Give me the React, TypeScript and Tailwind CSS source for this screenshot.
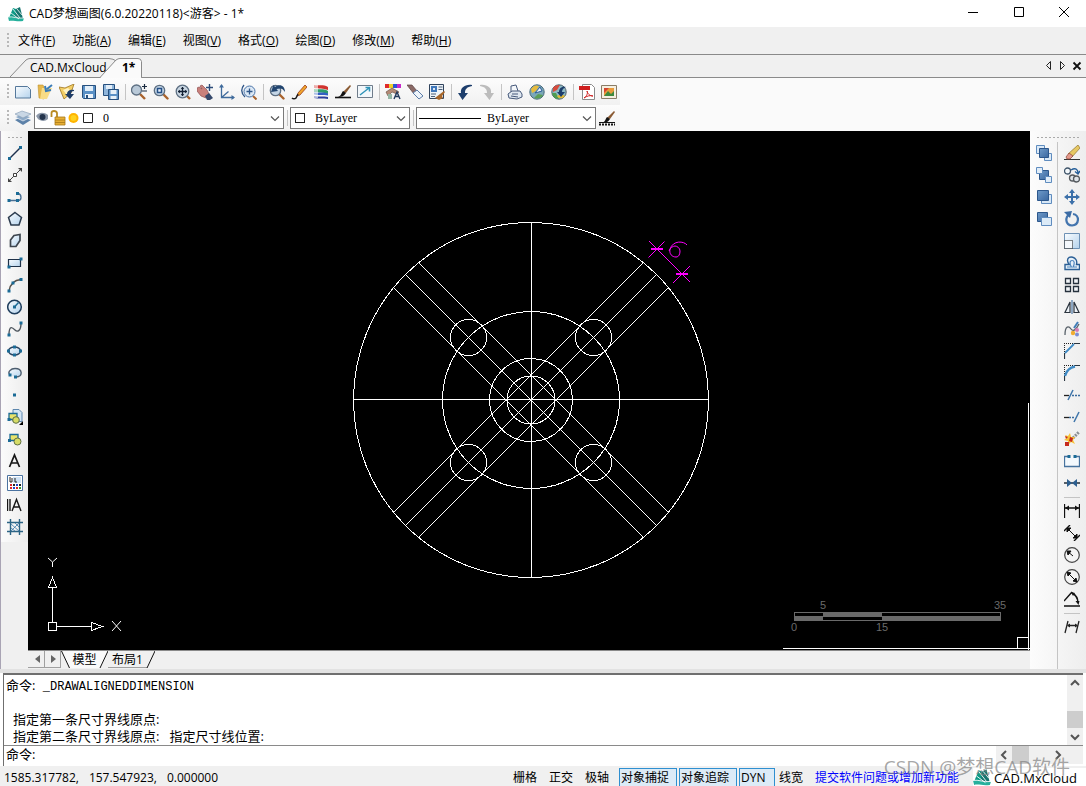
import type { ReactNode } from "react";

type Tool = { name: string; icon: ReactNode } | null;

const gradients = (
  <svg width="0" height="0" className="absolute" aria-hidden="true">
    <defs>
      <linearGradient id="sheet" x1="0" y1="0" x2="1" y2="1">
        <stop offset="0" stopColor="#fafdff" />
        <stop offset="1" stopColor="#b4d2ec" />
      </linearGradient>
      <linearGradient id="steel" x1="0" y1="0" x2="1" y2="1">
        <stop offset="0" stopColor="#6f9bca" />
        <stop offset="1" stopColor="#3a679f" />
      </linearGradient>
    </defs>
  </svg>
);

const lens = (
  <>
    <path d="M10.5 10.5l4 4" stroke="#a8622c" strokeWidth="2.4" strokeLinecap="round" />
    <circle cx="6.5" cy="6.5" r="5.2" fill="#c3d5e6" stroke="#5d6f82" strokeWidth="1.3" />
  </>
);

const node = (x: number, y: number) => (
  <rect key={`${x}-${y}`} x={x - 1.5} y={y - 1.5} width="3" height="3" fill="#1b6b96" />
);

const fileTools: Tool[] = [
  { name: "新建", icon: <path d="M.5 2.5h12l3 3v8.500h-15z" fill="url(#sheet)" stroke="#55789b" /> },
  {
    name: "打开",
    icon: (
      <>
        <path d="M1 1h5l1 2v12l-5-1z" fill="#e5b84c" stroke="#c0922f" strokeWidth=".6" />
        <path d="M5 4h10l-5 11H3z" fill="#f8dc86" />
        <path d="M15 1l-5 4M8 2l1 5 5-1" stroke="#3b7cb8" strokeWidth="2" fill="none" />
      </>
    ),
  },
  {
    name: "打开云图",
    icon: (
      <>
        <path d="M0 3l6 1 9-4-3 9-7 6z" fill="#f3cf66" stroke="#9d7420" strokeWidth=".8" />
        <path d="M4 6l5-2 3 3-4 4z" fill="#fff3c4" />
        <path d="M15 6c-4-1-7 1-7 4H6l5 5 4-5h-3c0-2 1-3 3-3z" fill="#1f3c66" />
      </>
    ),
  },
  {
    name: "保存",
    icon: (
      <>
        <path d="M1.5 1.5h13v13h-12l-1-1z" fill="#5b91c6" stroke="#27507e" />
        <path d="M4 2h8v5H4z" fill="#e3eff9" />
        <path d="M4 10h8v4H4z" fill="#eef4fa" />
        <path d="M5 11h2v3H5z" fill="#27507e" />
      </>
    ),
  },
  {
    name: "全部保存",
    icon: (
      <>
        <path d="M.5 .5h11v11H.5z" fill="#8fb5da" stroke="#27507e" />
        <path d="M3 1h6v4H3z" fill="#e3eef8" />
        <path d="M5.500 5.500h10v10h-10z" fill="#5b91c6" stroke="#27507e" />
        <path d="M7.500 6h6v4h-6zM7.500 12h6v3h-6z" fill="#e6f0f8" />
      </>
    ),
  },
  null,
  {
    name: "实时缩放",
    icon: (
      <>
        <path d="M9 10l5 5" stroke="#a8622c" strokeWidth="2.4" />
        <circle cx="5.500" cy="6" r="5" fill="#b9c9d8" stroke="#5d6f82" strokeWidth="1.300" />
        <path d="M13.500 0v5M11 2.500h5M11 7h5" stroke="#1b2b40" strokeWidth="1.200" />
      </>
    ),
  },
  { name: "窗口缩放", icon: <>{lens}<path d="M4.500 4.500h4v4h-4z" fill="#e8f1fa" stroke="#244f86" strokeWidth="1.500" /></> },
  {
    name: "范围缩放",
    icon: (
      <>
        <path d="M11 11l4 4" stroke="#a8622c" strokeWidth="2.400" />
        <circle cx="7.500" cy="7.500" r="6.300" fill="#c9d6e2" stroke="#5d6f82" strokeWidth="1.300" />
        <path d="M7.500 3v9M3 7.500h9" stroke="#111f33" strokeWidth="1.300" />
        <path d="M5.800 5l1.700-2 1.700 2zM5.800 10l1.700 2 1.700-2zM5 5.800l-2 1.700 2 1.700zM10 5.800l2 1.700-2 1.700z" fill="#111f33" />
      </>
    ),
  },
  {
    name: "平移",
    icon: (
      <>
        <path d="M0 4l2-1 3 2-2-3 2-1 5 5 2 4-3 4-5-2-4-5z" fill="#c9817c" stroke="#8d4f50" strokeWidth=".7" />
        <path d="M8 12l4-3 4 5-3 2h-3z" fill="#35486b" />
        <path d="M12.500 0v7M9 3.500h7" stroke="#2c4c79" strokeWidth="1.400" />
      </>
    ),
  },
  {
    name: "坐标系",
    icon: (
      <>
        <path d="M2.500 1v12.500H15M2.500 13.500l7-6" fill="none" stroke="#3f6b9c" strokeWidth="1.300" />
        <path d="M0 3.500L2.500 0 5 3.500zM12.500 11l3.500 2.500-3.500 2.500z" fill="#3f6b9c" />
      </>
    ),
  },
  {
    name: "缩放比例",
    icon: (
      <>
        <path d="M12 12l3.500 3.500" stroke="#a8622c" strokeWidth="2" />
        <circle cx="8.500" cy="7.500" r="5.500" fill="#dbe8f5" stroke="#4b74a8" />
        <path d="M3 1q-5 6 1 12M8.500 4.500v6M5.500 7.500h6" fill="none" stroke="#2f5688" strokeWidth="1.300" />
      </>
    ),
  },
  null,
  {
    name: "上一视图",
    icon: (
      <>
        {lens}
        <path d="M16 8c0-6-5-9-10-5L4.500 1 2 8l7-1-1.500-2c4-1 6-1 8.500 3z" fill="#22456f" />
      </>
    ),
  },
  {
    name: "画笔",
    icon: (
      <>
        <path d="M14 1l2 2-7 8-3 1 1-3z" fill="#f0a52c" stroke="#9c3b1b" strokeWidth=".8" />
        <path d="M7 10l-1 2-1 2c-1 1-3 1-4 0" fill="none" stroke="#1a1a1a" strokeWidth="1.500" />
      </>
    ),
  },
  {
    name: "图层颜色",
    icon: (
      <>
        <path d="M1 1c5 1 9-1 14 2v3C10 4 6 5 1 4z" fill="#d0342f" />
        <path d="M1 5c5 1 9-1 14 2v3c-5-2-9-1-14-2z" fill="#2e9c6c" />
        <path d="M1 8.500c5 1 9-1 14 1v2c-5-1-9 0-14-1z" fill="#3260c4" />
        <path d="M1 12c5 1 9 0 14 1v2c-5-1-9 0-14-1z" fill="#2a3e9c" />
        <path d="M1 1v13h4V1z" fill="#fff" fillOpacity=".6" />
      </>
    ),
  },
  {
    name: "线型",
    icon: (
      <>
        <path d="M15 1l1 1-5 7-3-1z" fill="#8a5a33" />
        <path d="M8 7l3 2c-2 3-4 4-8 4 3-1 3-3 5-6z" fill="#111" />
        <path d="M0 13.500h16" stroke="#111" strokeWidth="1.600" />
      </>
    ),
  },
  {
    name: "全屏",
    icon: (
      <>
        <path d="M.5 1.500h15v12H.5z" fill="#f2f7fb" stroke="#6f7c8a" />
        <path d="M3 11l9-7M8.500 3.500h4v4" fill="none" stroke="#2f94b8" strokeWidth="1.500" />
      </>
    ),
  },
  null,
  {
    name: "颜色替换",
    icon: (
      <>
        <path d="M0 0h4v4H0z" fill="#e02b2b" />
        <path d="M4 0h4v4H4z" fill="#f0d02a" />
        <path d="M8 0h4v4H8z" fill="#2856d6" />
        <path d="M12 0h4v4h-4z" fill="#c72ac9" />
        <path d="M1 8l6-4 7 4-2 2-5-2-4 4z" fill="#b38a76" stroke="#604437" strokeWidth=".6" />
        <path d="M3 10h4v5H3z" fill="#95b6a5" />
        <path d="M9 15l3-7 3 7M10 12.500h4" fill="none" stroke="#233a5c" strokeWidth="1.400" />
      </>
    ),
  },
  {
    name: "格式刷",
    icon: (
      <>
        <path d="M0 1l5 0 5 6-3 3z" fill="#8b6a66" stroke="#5a4040" strokeWidth=".7" />
        <path d="M6 9l4-3 6 6-4 3z" fill="#eef4fa" stroke="#5b7ba6" />
      </>
    ),
  },
  {
    name: "属性",
    icon: (
      <>
        <path d="M.5 .5h14v14H.5z" fill="#eef3f8" stroke="#30435c" />
        <path d="M2 2h6v6H2z" fill="#3f77bb" />
        <path d="M4 4h2v2H4z" fill="#dbe8f5" />
        <path d="M9.500 3h4M9.500 5.500h4M2 10h5M2 12.500h4" stroke="#4c6078" />
        <path d="M15 7l1 1-3 4 1 2-4 2-4-2 5-4z" fill="#a8672a" />
      </>
    ),
  },
  null,
  { name: "撤销", icon: <path d="M15 1C8 0 3 4 4 9H1l4.500 7L11 9H8c0-4 2-6 7-7z" fill="#1d3e6c" /> },
  { name: "重做", icon: <path d="M1 1c7-1 12 3 11 8h3l-4.500 7L5 9h3c0-4-2-6-7-7z" fill="#bcbcbc" /> },
  null,
  {
    name: "打印",
    icon: (
      <>
        <path d="M4 8V2l5-1 2 6" fill="#f4f7fa" stroke="#46597a" />
        <path d="M1 10l4-3 8 0 2 3v3l-5 2-8-1z" fill="#dfe7f0" stroke="#46597a" />
        <path d="M5 10h6M4 12l7 1" stroke="#46597a" />
      </>
    ),
  },
  {
    name: "发布到网页",
    icon: (
      <>
        <circle cx="8" cy="8" r="7.200" fill="#7aa7b8" stroke="#4a6a7c" />
        <path d="M2 5c3-4 5-4 8-3L7 7 3 9z" fill="#e6bb3e" />
        <path d="M5 14l4-4 5 1c-2 4-6 4-9 3z" fill="#5a9e56" />
        <path d="M6 9l5-6 2 4z" fill="#eaf3fb" stroke="#2f5f9a" />
      </>
    ),
  },
  {
    name: "网络图纸",
    icon: (
      <>
        <circle cx="8" cy="8" r="7.200" fill="#8db9c4" stroke="#4c5f6a" />
        <path d="M2 4c2-3 5-3 7-3L6 6 2 8z" fill="#d84b3d" />
        <path d="M1 9l4 0 3 6c-4 0-6-2-7-6z" fill="#4f9c51" />
        <path d="M6 12l4-2 4 2c-2 3-6 3-8 0z" fill="#e4bb35" />
        <path d="M15 3c-5-1-7 2-7 5H6l4 5 4-5h-3c0-2 1-4 4-5z" fill="#1d3e6c" />
      </>
    ),
  },
  null,
  {
    name: "导出PDF",
    icon: (
      <>
        <path d="M3.500 .5h9l3 3v12h-12z" fill="#fff" stroke="#8a8a8a" />
        <path d="M0 2h11v4H0z" fill="#cf1f1f" />
        <path d="M5 14c3-2 4-5 3-7 1 4 4 5 6 5-3-1-6 0-9 2z" fill="none" stroke="#cf1f1f" />
      </>
    ),
  },
  {
    name: "导出图片",
    icon: (
      <>
        <path d="M.5 1.500h15v13H.5z" fill="#f6efdf" stroke="#8a7d67" />
        <path d="M3 4h10v8H3z" fill="#e99a3a" />
        <path d="M3 12l4-5 3 3 3-3v5z" fill="#3f8a3d" />
        <path d="M3 4h5L3 9z" fill="#d4442f" />
      </>
    ),
  },
];

const layersIcon = (
  <>
    <path d="M0 10l7-3 9 3-8 5z" fill="#5c81a8" />
    <path d="M0 7l7-3 9 3-8 4z" fill="#8fabc8" stroke="#fff" strokeWidth=".6" />
    <path d="M0 4l7-3 9 3-8 4z" fill="#c9d7e5" stroke="#8198b0" strokeWidth=".6" />
  </>
);

const lineWeightIcon = (
  <>
    <path d="M15 1l1 1-5 7-3-1z" fill="#8a5a33" />
    <path d="M8 7l3 2c-2 3-4 4-8 4 3-1 3-3 5-6z" fill="#111" />
    <path d="M0 12.500h16" stroke="#111" />
    <path d="M0 14.500h16" stroke="#111" strokeWidth="2" strokeDasharray="2 1" />
  </>
);

const drawTools: Tool[] = [
  { name: "直线", icon: <><path d="M2.500 13.500l11-11" stroke="#1c2f4c" strokeWidth="1.500" />{node(2.5, 13.5)}{node(13.5, 2.500)}</> },
  {
    name: "构造线",
    icon: (
      <>
        <path d="M1 15L15 1" stroke="#444" />
        <path d="M11 1h4v4zM1 11v4h4z" fill="#444" />
        <path d="M6.500 6.500h3v3h-3z" fill="#fff" stroke="#444" />
      </>
    ),
  },
  { name: "多段线", icon: <><path d="M2 11.500h9c4 0 4-6 0-7" fill="none" stroke="#4a6f93" strokeWidth="1.300" />{node(2, 11.5)}{node(10.5, 11.500)}{node(10.5, 4.5)}</> },
  { name: "多边形", icon: <path d="M8 1.500l6.500 5-2.500 7.500H4L1.500 6.500z" fill="url(#sheet)" stroke="#2b3b4e" strokeWidth="1.500" /> },
  { name: "面域", icon: <path d="M7 2.500l6-1v6l-4 6H3.500V7z" fill="url(#sheet)" stroke="#3d454e" strokeWidth="1.700" /> },
  { name: "矩形", icon: <><path d="M1.500 4.500h12v7h-12z" fill="url(#sheet)" stroke="#1e3148" strokeWidth="1.200" />{node(2, 12)}{node(14, 4)}</> },
  { name: "圆弧", icon: <><path d="M2 14C3 8 7 3 14 2.500" fill="none" stroke="#5b534c" strokeWidth="1.500" />{node(2, 14)}{node(6, 6)}{node(14, 2.5)}</> },
  { name: "圆", icon: <><circle cx="7.500" cy="8" r="6.800" fill="url(#sheet)" stroke="#1e3d5c" strokeWidth="1.500" /><path d="M7.500 8l4-4.500" stroke="#1b6b96" strokeWidth="1.500" />{node(7.5, 8)}</> },
  { name: "样条曲线", icon: <><path d="M2 14C2 3 6 7 8 9s6 2 6-7" fill="none" stroke="#4e565e" strokeWidth="1.400" />{node(2, 14)}{node(14, 2)}</> },
  { name: "椭圆", icon: <><ellipse cx="7.500" cy="8" rx="6" ry="4" fill="url(#sheet)" stroke="#2b4460" strokeWidth="1.400" />{node(1.5, 8)}{node(7.5, 4)}{node(13.5, 8)}{node(7.5, 12)}</> },
  { name: "椭圆弧", icon: <><path d="M3 10C0 7 4 3.500 8 3.500c8 0 8 8 1 8.500" fill="url(#sheet)" stroke="#4d5d6e" strokeWidth="1.400" />{node(3, 10)}{node(8.5, 12)}</> },
  { name: "点", icon: node(7.500, 8) },
  {
    name: "插入块",
    icon: (
      <>
        <path d="M6 .5h6l3 3v9H6z" fill="#d4e6f5" stroke="#5c86ad" />
        <path d="M2 4.500h8v6H2z" fill="#e7e36b" stroke="#1b6b96" strokeWidth="1.300" />
        <circle cx="9" cy="11" r="3.300" fill="#d6dc67" stroke="#5f7045" />
        <path d="M12 16h4v-4z" fill="#000" />
        {node(2, 10.500)}
      </>
    ),
  },
  { name: "创建块", icon: <><path d="M3 3.500h8v6H3z" fill="#e7e36b" stroke="#1b6b96" strokeWidth="1.300" /><circle cx="10.500" cy="10.500" r="3.500" fill="#d6dc67" stroke="#5f7045" />{node(2.5, 9.5)}</> },
  { name: "文字", icon: <path d="M2.500 14L7.500 2 12.500 14M4.500 10h6.500" fill="none" stroke="#161616" strokeWidth="1.700" /> },
  {
    name: "填充",
    icon: (
      <>
        <path d="M.5 .5h15v15H.5z" fill="#fff" stroke="#4a72a0" />
        <path d="M6 2h8v6H6z" fill="#cfe2f4" />
        <path d="M3 2v5h2V3M7 4h2M7 6h2v2" fill="none" stroke="#222" />
        <path d="M3 9h2v2H3zM3 12h2v2H3z" fill="#d22" />
        <path d="M6 9h2v2H6zM12 9h2v2h-2z" fill="#222" />
        <path d="M6 12h2v2H6zM9 9h2v2H9z" fill="#24c" />
        <path d="M9 12h2v2H9z" fill="#d22" />
        <path d="M12 12h2v2h-2z" fill="#393" />
      </>
    ),
  },
  { name: "多行文字", icon: <path d="M.5 2v12M3 2v12M5 14l4.500-11.500L14 14M6.500 10h6" fill="none" stroke="#161616" strokeWidth="1.400" /> },
  {
    name: "图案",
    icon: (
      <>
        <path d="M3.500 0v16M12.500 0v16M0 3.500h16M0 12.500h16" stroke="#2c6485" strokeWidth="1.400" />
        <path d="M4 5l8 7M4 9l4 3M8 4l4 4M4 12l8-8" stroke="#3d78a8" strokeWidth=".8" />
      </>
    ),
  },
];

const orderTools: Tool[] = [
  { name: "前置", icon: <><path d="M.5 .5h8v8h-8zM8.500 8.500h7v7h-7z" fill="#dceaf7" stroke="#5f8cbf" /><path d="M3.500 3.500h9v9h-9z" fill="url(#steel)" stroke="#2c578c" /></> },
  { name: "后置", icon: <><path d="M3.500 3.500h9v9h-9z" fill="url(#steel)" stroke="#2c578c" /><path d="M.5 .5h6v6h-6zM9.500 9.500h6v6h-6z" fill="#e2eef9" stroke="#5f8cbf" /></> },
  { name: "置于对象之上", icon: <><path d="M5.500 5.500h10v9h-10z" fill="#d7e7f6" stroke="#5f8cbf" /><path d="M1.500 1.500h11v10h-11z" fill="url(#steel)" stroke="#2c578c" /></> },
  { name: "置于对象之下", icon: <><path d="M1.500 1.500h10v9h-10z" fill="url(#steel)" stroke="#2c578c" /><path d="M5.500 6.500h10v8h-10z" fill="#dbeaf7" stroke="#5f8cbf" /></> },
];

const arrowPair = "M3 3l10 10M3 3l4 1-3 3zM13 13l-4-1 3-3z";

const modifyTools: Tool[] = [
  {
    name: "删除",
    icon: (
      <>
        <path d="M0 14.500h16" stroke="#333" />
        <path d="M14 0l2 3-8 9-4-3z" fill="#e6c863" stroke="#8f7430" strokeWidth=".7" />
        <path d="M5 8l4 3-3 3H3l-1-2z" fill="#e49a8c" stroke="#8a4035" strokeWidth=".7" />
      </>
    ),
  },
  {
    name: "复制",
    icon: (
      <>
        <circle cx="3.500" cy="4" r="3" fill="#f4f8fb" stroke="#41566b" strokeWidth="1.300" />
        <circle cx="8.500" cy="11" r="3" fill="#dfe5ea" stroke="#54595e" strokeWidth="1.300" />
        <circle cx="12.500" cy="12" r="3" fill="#dfe5ea" stroke="#54595e" strokeWidth="1.300" />
        <path d="M7 3c5-3 7 0 7 3M11 4.500l3 2.500 2-3" fill="none" stroke="#235d99" strokeWidth="1.400" />
      </>
    ),
  },
  { name: "移动", icon: <><path d="M8 2v12M2 8h12" stroke="#3c70a9" strokeWidth="2" /><path d="M5 4l3-4 3 4zM5 12l3 4 3-4zM4 5L0 8l4 3zM12 5l4 3-4 3z" fill="#3c70a9" /></> },
  { name: "旋转", icon: <><path d="M5.500 3.500C1 6 1 14 8 14.500 15.500 14 16 4 9 3" fill="none" stroke="#4375ae" strokeWidth="2.200" /><path d="M0 1l8-1-2 7z" fill="#3c6ca5" /></> },
  { name: "缩放", icon: <><path d="M.5 .5h15v15H.5z" fill="url(#sheet)" stroke="#6d91b5" /><path d="M.5 7.500h8v8h-8z" fill="#f4f8fc" stroke="#111" strokeDasharray="1 1" /></> },
  {
    name: "偏移",
    icon: (
      <>
        <path d="M1 14.500h14.500v-5h-3c2-8-9-10-9-4 0 2 1 3 2 4H1z" fill="#e6f0f9" stroke="#2b5f95" strokeWidth="1.400" />
        <path d="M3 12h4.500c-2-3-2-6.500 .5-6.500s3 3 1 6.500h4" fill="none" stroke="#4f86bd" strokeWidth="1.200" />
      </>
    ),
  },
  { name: "阵列", icon: <path d="M1.500 1.500h5v5h-5zM9.500 1.500h5v5h-5zM1.500 9.500h5v5h-5zM9.500 9.500h5v5h-5z" fill="#f1f4f7" stroke="#26313d" strokeWidth="1.300" /> },
  { name: "镜像", icon: <><path d="M8 1v14" stroke="#2b5f95" /><path d="M6 3v10.500H1zM10 3v10.500h5z" fill="#eef3f8" stroke="#2a333d" strokeWidth="1.200" /></> },
  {
    name: "编辑样条",
    icon: (
      <>
        <path d="M1 14C1 4 5 5 7 8s5 1 8-5" fill="none" stroke="#5a636b" strokeWidth="1.300" />
        <path d="M14 1l-4 6" stroke="#3f7db8" strokeWidth="2" />
        <circle cx="9" cy="12" r="2.200" fill="#f0ad32" />
        <circle cx="13" cy="9" r="2" fill="#d77ab4" />
        <circle cx="13" cy="13.500" r="2" fill="#7a8ed6" />
      </>
    ),
  },
  { name: "倒角", icon: <><path d="M0 .5h10M.5 0v10" stroke="#222" strokeDasharray="1 1" /><path d="M.5 16v-6M10 .5h6" stroke="#2a3641" strokeWidth="1.200" /><path d="M1 10L10 1" stroke="#3f8ac4" strokeWidth="1.800" /></> },
  { name: "圆角", icon: <><path d="M0 .5h10M.5 0v10" stroke="#222" strokeDasharray="1 1" /><path d="M.5 16v-6M10 .5h6" stroke="#2a3641" strokeWidth="1.200" /><path d="M1 11Q3 3 11 1.500" fill="none" stroke="#3f8ac4" strokeWidth="2.400" /></> },
  { name: "修剪", icon: <><path d="M0 8.500h5" stroke="#222" strokeWidth="1.300" /><path d="M8 8.500h8" stroke="#3b6c9e" strokeDasharray="2 1" strokeWidth="1.300" /><path d="M4 13L9 3" stroke="#3f76ab" strokeWidth="1.500" /></> },
  { name: "延伸", icon: <><path d="M0 8.500h5" stroke="#222" strokeWidth="1.300" /><path d="M5 8.500h6" stroke="#3b6c9e" strokeDasharray="2 1" strokeWidth="1.300" /><path d="M10 13l5-10" stroke="#3f76ab" strokeWidth="1.500" /></> },
  {
    name: "分解",
    icon: (
      <>
        <path d="M9 7l6-6" stroke="#8a8f94" strokeWidth="3" strokeDasharray="2 1" />
        <path d="M1 4l3 1 2-3 1 4 4 0-2 3 2 4-4-2-3 3 0-4-4-1 3-2z" fill="#f7c436" />
        <path d="M1 11h4v4H1zM6 6l3 1-1 4-3-1zM1 5l3 1-2 2z" fill="#c52a1e" />
      </>
    ),
  },
  { name: "打断", icon: <><path d="M5 3.500H.5v10h15v-10H11" fill="#f4f9fd" stroke="#47739e" strokeWidth="1.300" />{node(5, 3.5)}{node(11, 3.500)}</> },
  { name: "合并", icon: <><path d="M0 8h16" stroke="#15202b" strokeWidth="1.400" /><path d="M3 4L8 8l-5 4zM13 4L8 8l5 4z" fill="#2d5f8f" /></> },
  null,
  { name: "线性标注", icon: <><path d="M.5 1v14M15.500 1v14M1 5h14" stroke="#111" strokeWidth="1.300" /><path d="M1 5l4-2.500v5zM15 5l-4-2.500v5z" fill="#111" /></> },
  { name: "对齐标注", icon: <><path d="M3 3l10 10M3 3h4L3 7zM13 13H9l4-4z" fill="#111" stroke="#111" /><path d="M0 6l6-6M10 16l6-6" stroke="#111" strokeWidth="1.400" /></> },
  { name: "半径标注", icon: <><circle cx="8" cy="8" r="7.300" fill="#f4f4f4" stroke="#444" strokeWidth="1.200" /><path d="M9 9L3 4M3 4h4L4 8z" fill="#111" stroke="#111" /></> },
  { name: "直径标注", icon: <><circle cx="8" cy="8" r="7.300" fill="#f4f4f4" stroke="#444" strokeWidth="1.200" /><path d={arrowPair} fill="#111" stroke="#111" /></> },
  { name: "角度标注", icon: <><path d="M0 15h16M0 10L8 1M8 2c4 2 6 6 6 10" fill="none" stroke="#111" strokeWidth="1.400" /><path d="M7 1l4 1-2 3zM11.500 10h4l-1 4z" fill="#111" /></> },
  null,
  { name: "编辑标注", icon: <><path d="M1 14L4 2M12 14l3-12M4 6.500h9" stroke="#222" strokeWidth="1.300" /><path d="M3 6.500l3-2v4zM14 6.500l-3-2v4z" fill="#222" /></> },
];

const menus = [
  ["文件", "F"],
  ["功能", "A"],
  ["编辑", "E"],
  ["视图", "V"],
  ["格式", "O"],
  ["绘图", "D"],
  ["修改", "M"],
  ["帮助", "H"],
];

const statusModes = [
  { label: "栅格", on: false },
  { label: "正交", on: false },
  { label: "极轴", on: false },
  { label: "对象捕捉", on: true },
  { label: "对象追踪", on: true },
  { label: "DYN", on: true },
  { label: "线宽", on: false },
];

const Icon = ({ children }: { children: ReactNode }) => (
  <svg viewBox="0 0 16 16" className="size-4 shrink-0" fill="none" aria-hidden="true">
    {children}
  </svg>
);

const ToolBar = ({ tools, vertical = false }: { tools: Tool[]; vertical?: boolean }) => (
  <div role="toolbar" className={vertical ? "flex flex-col items-center" : "flex items-center"}>
    {tools.map((tool, i) =>
      tool ? (
        <button key={tool.name} aria-label={tool.name} className="flex size-[22px] items-center justify-center hover:bg-sky-100">
          <Icon>{tool.icon}</Icon>
        </button>
      ) : (
        <span key={i} className={vertical ? "mb-[2px] mt-[3px] h-px w-4 bg-[#c4c4c4]" : "ml-[3px] mr-[2px] h-4 w-px bg-[#c4c4c4]"} />
      )
    )}
  </div>
);

const Grip = () => (
  <span className="ml-[7px] mr-[3px] h-4 w-[2px] bg-[repeating-linear-gradient(to_bottom,#b8b8b8_0_2px,transparent_2px_4px)]" />
);

const Chevron = () => (
  <svg viewBox="0 0 10 6" className="pointer-events-none absolute right-1 top-[9px] h-[6px] w-[10px]" fill="none" aria-hidden="true">
    <path d="M1 .5l4 4 4-4" stroke="#555" strokeWidth="1.200" />
  </svg>
);

const Logo = ({ className }: { className: string }) => (
  <svg viewBox="0 0 16 16" className={className} aria-hidden="true">
    <path d="M1 12L5 2l3 1 2 10z" fill="#0e9a86" />
    <path d="M7 13l1-10 4-2 3 12z" fill="#16756f" />
    <path d="M0 11c5-1 9 2 16 1l-1 3c-6 1-10-1-14 0z" fill="#25b09c" />
    <path d="M5 3l7 9M3 7l8 6M9 3l5 6M0 11c5-1 9 2 16 1" fill="none" stroke="#fff" strokeWidth=".8" />
  </svg>
);

const TitleBar = () => (
  <header className="flex h-[27px] items-center bg-white pl-2">
    <Logo className="size-4" />
    <h1 className="ml-[5px] text-[12px] leading-4">CAD梦想画图(6.0.20220118)&lt;游客&gt; - 1*</h1>
    <div className="ml-auto flex h-full">
      <button aria-label="最小化" className="flex w-[46px] items-center justify-center pb-1">
        <svg viewBox="0 0 10 10" className="size-[10px]" fill="none"><path d="M0 5.500h10" stroke="#000" /></svg>
      </button>
      <button aria-label="最大化" className="flex w-[46px] items-center justify-center pb-1">
        <svg viewBox="0 0 10 10" className="size-[10px]" fill="none"><path d="M.5 .5h9v9h-9z" stroke="#000" /></svg>
      </button>
      <button aria-label="关闭" className="flex w-[44px] items-center justify-center pb-1">
        <svg viewBox="0 0 10 10" className="size-[10px]" fill="none"><path d="M0 0l10 10M10 0L0 10" stroke="#000" /></svg>
      </button>
    </div>
  </header>
);

const MenuBar = () => (
  <nav className="flex h-[27px] items-center bg-[#f0f0f0]">
    <Grip />
    <div className="flex gap-[17px] pl-[6px]">
      {menus.map(([label, key]) => (
        <button key={key} className="text-[12px] leading-4 whitespace-nowrap">
          {label}(<span className="underline">{key}</span>)
        </button>
      ))}
    </div>
  </nav>
);

const DocumentTabs = () => (
  <div className="flex h-6 items-end border-y border-[#8a8a8a] bg-[#f0f0f0]">
    <button className="relative ml-[10px] h-[19px] w-[108px] pl-5 text-left text-[12px] leading-[17px]">
      <svg viewBox="0 0 108 19" className="absolute inset-0 h-full w-full" fill="none">
        <path d="M0 19L16 2q2-1.500 4-1.500h79q4 0 8 3" stroke="#8a8a8a" />
      </svg>
      <span className="relative">CAD.MxCloud</span>
    </button>
    <button className="relative -mb-px -ml-[18px] h-5 w-[42px] pl-[22px] text-left text-[12px] leading-[18px] font-bold">
      <svg viewBox="0 0 42 20" className="absolute inset-0 h-full w-full">
        <path d="M0 19.500L16 2q2-1.500 4-1.500h18q3 0 3.500 3V19.500" fill="#fafafa" stroke="#8a8a8a" />
        <path d="M1 19.500h40" stroke="#fafafa" />
      </svg>
      <span className="relative">1*</span>
    </button>
    <div className="ml-auto flex h-full items-center gap-1 pr-1">
      <button aria-label="上一个标签">
        <svg viewBox="0 0 10 10" className="size-[10px]" fill="none"><path d="M6.500 .5v8L2.500 4.500z" stroke="#222" /></svg>
      </button>
      <button aria-label="下一个标签">
        <svg viewBox="0 0 10 10" className="size-[10px]" fill="none"><path d="M2.500 .5v8l4-4z" stroke="#222" /></svg>
      </button>
      <button aria-label="关闭标签">
        <svg viewBox="0 0 10 10" className="size-[10px]" fill="none"><path d="M1.500 1.500l7 7M8.500 1.500l-7 7" stroke="#111" strokeWidth="1.800" /></svg>
      </button>
    </div>
  </div>
);

const selectStyle =
  "block h-[22px] w-full appearance-none rounded-none border border-[#7a7a7a] bg-white font-['Liberation_Serif',serif] text-[12px] leading-4 text-black";

const PropertyBar = () => (
  <div className="flex h-[26px] items-center">
    <Grip />
    <button aria-label="图层管理" className="flex size-[22px] items-center justify-center">
      <Icon>{layersIcon}</Icon>
    </button>
    <div className="relative w-[250px]">
      <select aria-label="图层" className={`${selectStyle} pl-[68px]`}>
        <option>0</option>
      </select>
      <svg viewBox="0 0 58 16" className="pointer-events-none absolute left-[2px] top-[3px] h-4 w-[58px]" fill="none" aria-hidden="true">
        <path d="M0 6c3-4 8-4 12-1v4c-3 3-8 2-10 0z" fill="#8b97a8" />
        <circle cx="6.500" cy="7" r="3" fill="#24344c" />
        <path d="M15.500 7V3q0-2 2.500-2t3 2v4" stroke="#b98b24" strokeWidth="1.800" />
        <path d="M19 7h10v8H19z" fill="#e7ae35" stroke="#a87818" strokeWidth=".8" />
        <path d="M19 10h10M19 12.500h10" stroke="#a87818" strokeWidth=".8" />
        <circle cx="37.500" cy="8" r="5" fill="#ffb400" />
        <circle cx="37.500" cy="8" r="3" fill="#ffd21f" />
        <path d="M47.500 3.500h9v9h-9z" stroke="#222" />
      </svg>
      <Chevron />
    </div>
    <span className="ml-[3px] mr-[2px] h-4 w-px bg-[#c4c4c4]" />
    <div className="relative w-[120px]">
      <select aria-label="颜色" className={`${selectStyle} pl-6`}>
        <option>ByLayer</option>
      </select>
      <span className="pointer-events-none absolute left-[5px] top-[6px] size-[10px] border border-[#222]" />
      <Chevron />
    </div>
    <span className="ml-[3px] mr-[2px] h-4 w-px bg-[#c4c4c4]" />
    <div className="relative w-[180px]">
      <select aria-label="线型" className={`${selectStyle} pl-[70px]`}>
        <option>ByLayer</option>
      </select>
      <span className="pointer-events-none absolute left-[3px] top-[11px] h-px w-[62px] bg-black" />
      <Chevron />
    </div>
    <button aria-label="线宽设置" className="flex size-[22px] items-center justify-center">
      <Icon>{lineWeightIcon}</Icon>
    </button>
  </div>
);

// centre of the part in sheet units
const cx = 531;
const cy = 400;
const reach = 125;
const corners = [
  [-1, -1],
  [1, -1],
  [-1, 1],
  [1, 1],
];

const Drawing = () => (
  <svg viewBox="28 131 1002 519" className="h-full w-full" fill="none" stroke="#fff" shapeRendering="crispEdges">
    {[177.5, 88.5, 41.5, 24].map((r) => (
      <circle key={r} cx={cx} cy={cy} r={r} />
    ))}
    {corners.map(([sx, sy]) => (
      <circle key={`${sx}${sy}`} cx={cx + sx * 62.5} cy={cy + sy * 62.5} r="18" />
    ))}
    <path d="M531.5 222v355M354 399.500h355" />
    {[-12.5, 0, 12.5].map((d) => (
      <g key={d}>
        <path d={`M${cx - reach + d} ${cy - reach - d}L${cx + reach + d} ${cy + reach - d}`} />
        <path d={`M${cx + reach + d} ${cy - reach + d}L${cx - reach + d} ${cy + reach + d}`} />
      </g>
    ))}

    {/* aligned dimension */}
    <g stroke="#ff00ff" shapeRendering="auto">
      <path d="M649 241l33 33M664.500 241.500l-16 16M690 266l-17 17M682 274l8 8" />
      <path d="M651 249h12M676 274h12" strokeWidth="2" />
      <path d="M687 245c-3-4-14-5-17 4-1 5 2 8 6 8 3 0 4-3 4-6s-3-5-5-5-5 2-6 5" />
    </g>

    {/* ucs icon */}
    <path d="M48.500 622.500h8v8h-8zM52.500 622v-34M48.500 587.500h8l-4-10zM57 626.500h34M91.500 622.500v8l11-4z" />
    <path d="M48 558l4.500 4v5M57 558l-4.500 4M112 621l9 10M121 621l-9 10" shapeRendering="auto" />

    {/* scale ruler */}
    <g fill="#6a6a6a" stroke="none">
      <path d="M794 612h207v9H794zM795 613v3h28v-3zM823 617v3h59v-3zM882 613v3h118v-3z" fillRule="evenodd" />
      <g fontFamily="Liberation Sans, sans-serif" fontSize="11" textAnchor="middle">
        <text x="823" y="609">5</text>
        <text x="1000" y="609">35</text>
        <text x="794" y="631">0</text>
        <text x="882" y="631">15</text>
      </g>
    </g>

    {/* crosshair with pick box */}
    <path d="M783 648.500h247M1028.500 403v247M1017.500 637.500h11v11h-11z" />
  </svg>
);

const SheetTabs = () => (
  <div className="flex h-[19px] items-start border-t border-[#8a8a8a] bg-[#f0f0f0]">
    <button aria-label="向左" className="flex h-[17px] w-[17px] items-center justify-center border-b border-r border-[#a0a0a0] pl-1">
      <svg viewBox="0 0 8 8" className="size-2"><path d="M6 0v8L1 4z" fill="#666" /></svg>
    </button>
    <button aria-label="向右" className="flex h-[17px] w-4 items-center justify-center border-b border-r border-[#a0a0a0]">
      <svg viewBox="0 0 8 8" className="size-2"><path d="M2 0v8l5-4z" fill="#666" /></svg>
    </button>
    <button className="relative h-[17px] w-[47px] text-[12px] leading-[17px]">
      <svg viewBox="0 0 47 17" className="absolute inset-0 h-full w-full">
        <path d="M.5 0l8 17h31l8-17z" fill="#fafafa" />
        <path d="M.5 0l8 17M47 0l-8 17" stroke="#111" />
      </svg>
      <span className="relative">模型</span>
    </button>
    <button className="relative h-[17px] w-[47px] pr-2 text-[12px] leading-[17px]">
      <svg viewBox="0 0 47 17" className="absolute inset-0 h-full w-full" fill="none">
        <path d="M-4 8l4 8.500h39" stroke="#a0a0a0" />
        <path d="M47 0l-8 17" stroke="#111" />
      </svg>
      <span className="relative">布局1</span>
    </button>
  </div>
);

const Workspace = () => (
  <main className="flex min-h-0 flex-1">
    <aside className="flex w-7 shrink-0 flex-col items-center border-l border-[#a9a4b4] bg-[#f0f0f0]">
      <div className="w-full bg-gradient-to-r from-[#fbfbfb] to-[#ececec] pb-1">
        <span className="mx-auto mb-1 mt-[6px] block h-px w-[14px] bg-[repeating-linear-gradient(to_right,#aaa_0_2px,transparent_2px_4px)]" />
        <ToolBar tools={drawTools} vertical />
      </div>
    </aside>
    <div className="flex min-w-0 flex-1 flex-col">
      <div className="min-h-0 flex-1 bg-black">
        <Drawing />
      </div>
      <SheetTabs />
    </div>
    <aside className="flex w-14 shrink-0 flex-col bg-gradient-to-r from-[#fcfcfc] to-[#eeeeee]">
      <span className="mx-auto mb-1 mt-[6px] block h-px w-[42px] shrink-0 bg-[repeating-linear-gradient(to_right,#aaa_0_2px,transparent_2px_4px)]" />
      <div className="flex flex-1">
        <div className="w-7 border-r border-[#c4c4c4]">
          <ToolBar tools={orderTools} vertical />
        </div>
        <div className="w-7">
          <ToolBar tools={modifyTools} vertical />
        </div>
      </div>
    </aside>
  </main>
);

const ScrollArrow = ({ d, label }: { d: string; label: string }) => (
  <button aria-label={label} className="flex size-4 shrink-0 items-center justify-center">
    <svg viewBox="0 0 10 10" className="size-[10px]" fill="none"><path d={d} stroke="#555" strokeWidth="2" /></svg>
  </button>
);

const CommandPanel = () => (
  <section className="border-b-2 border-t-4 border-b-[#f0f0f0] border-t-[#e2e2e2] bg-white px-[3px] text-[13px]">
    <div className="border-l border-t-2 border-[#6f6f6f]">
      <div className="flex h-[70px]">
        <div className="flex-1 pl-[2px] pt-[2px] leading-[17px] whitespace-pre">
          <p className="h-[17px]">命令: <span className="ml-1 font-['Liberation_Mono',monospace] text-[12px]">_DRAWALIGNEDDIMENSION</span></p>
          <p className="h-[17px]" />
          <p className="h-[17px] pl-[7px]">指定第一条尺寸界线原点:</p>
          <p className="h-[17px] pl-[7px]">指定第二条尺寸界线原点:   指定尺寸线位置:</p>
        </div>
        <div className="flex w-4 flex-col bg-[#f0f0f0]">
          <ScrollArrow label="向上滚动" d="M1 7l4-4 4 4" />
          <span className="mb-px mt-auto h-[17px] bg-[#cdcdcd]" />
          <ScrollArrow label="向下滚动" d="M1 3l4 4 4-4" />
        </div>
      </div>
      <div className="flex h-[21px] border-t border-[#8a8a8a] pl-[2px]">
        <label htmlFor="command" className="leading-[17px]">命令:</label>
        <input id="command" className="min-w-0 flex-1 bg-transparent pl-2 outline-none" />
        <div className="flex h-[18px] w-[87px] items-center bg-[#f0f0f0] pr-[17px]">
          <ScrollArrow label="向左滚动" d="M7 1L3 5l4 4" />
          <span className="mr-auto h-full w-[17px] bg-[#cdcdcd]" />
          <ScrollArrow label="向右滚动" d="M3 1l4 4-4 4" />
        </div>
      </div>
    </div>
  </section>
);

const StatusBar = () => (
  <footer className="relative flex h-[18px] items-center bg-[#f0f0f0] pl-1 text-[12px] whitespace-nowrap">
    <span className="flex gap-[10px] pt-[2px] leading-4">
      <span>1585.317782,</span>
      <span>157.547923,</span>
      <span>0.000000</span>
    </span>
    <div className="ml-auto flex h-full items-center">
      {statusModes.map((mode) => (
        <button
          key={mode.label}
          aria-pressed={mode.on}
          className={
            mode.on
              ? "mr-[2px] h-full min-w-[36px] border border-b-0 border-[#2f8fd0] bg-[#dcebf7] pl-px pr-[7px] pt-px text-left leading-4"
              : "px-[6px] pt-[2px] leading-4 [&:last-child]:px-[2px] [&:nth-child(3)]:mr-1"
          }
        >
          {mode.label}
        </button>
      ))}
    </div>
    <a href="#feedback" className="ml-[10px] pt-[2px] leading-4 text-[#0000ff]">提交软件问题或增加新功能</a>
    <div className="ml-[14px] flex h-full items-center gap-[3px] bg-white pr-[9px]">
      <Logo className="size-[18px]" />
      <span className="pt-px text-[13px] leading-4">CAD.MxCloud</span>
    </div>
    <span className="pointer-events-none absolute bottom-[7px] right-4 text-[19px] leading-6 text-[#808080]/70">CSDN @梦想CAD软件</span>
  </footer>
);

export default function App() {
  return (
    <div className="flex h-screen min-h-[600px] flex-col overflow-hidden bg-[#fafafa] font-['Open_Sans','Noto_Sans_CJK_SC',sans-serif] text-black">
      {gradients}
      <TitleBar />
      <MenuBar />
      <DocumentTabs />
      <div className="bg-[#fafafa]">
        <div className="flex h-[27px] w-[620px] items-center bg-gradient-to-b from-[#fcfcfc] to-[#f1f1f1]">
          <Grip />
          <ToolBar tools={fileTools} />
        </div>
        <div className="w-[620px] bg-gradient-to-b from-[#fcfcfc] to-[#f1f1f1]">
          <PropertyBar />
        </div>
      </div>
      <Workspace />
      <CommandPanel />
      <StatusBar />
    </div>
  );
}
